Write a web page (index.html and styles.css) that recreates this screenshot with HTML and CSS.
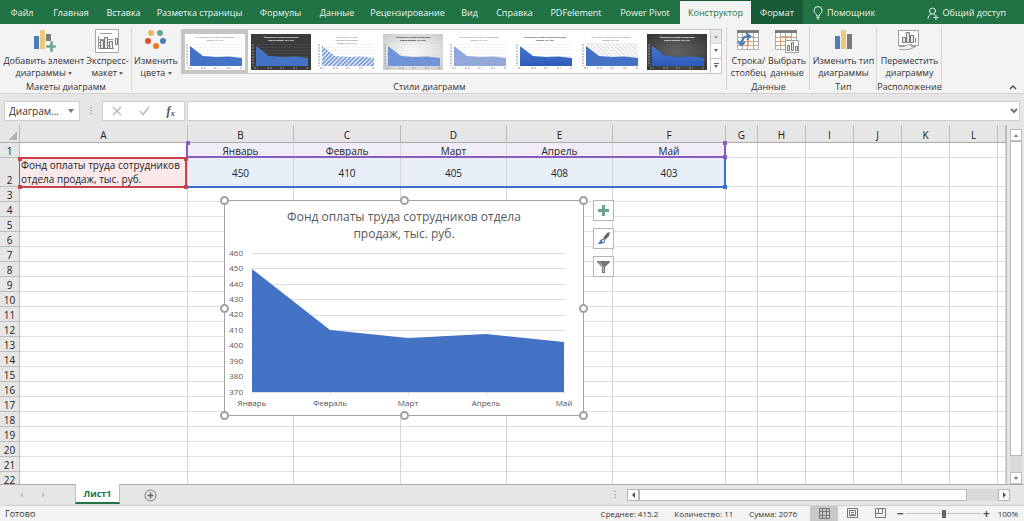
FILE: index.html
```html
<!DOCTYPE html>
<html lang="ru">
<head>
<meta charset="utf-8">
<title>Лист1</title>
<link rel="stylesheet" href="styles.css">
</head>
<body>
<svg class="defs" width="0" height="0" aria-hidden="true">
  <defs>
    <symbol id="thumb" viewBox="0 0 60 36">
      <path class="t-grid" d="M5 10.5H57M5 13.5H57M5 16.5H57M5 19.5H57M5 22.5H57M5 25.5H57"/>
      <path class="t-hatch" d="M5 9H57V24L44 22.500 31 23 18 22 5 12Z"/>
      <path class="t-area" d="M5 12L18 22 31 23 44 22.500 57 24V32H5Z"/>
      <path class="t-axis" d="M2 10V32M3 34H7M16 34H22M29 34H33M42 34H46M55 34H58"/>
    </symbol>
    <linearGradient id="deep" x1="0" y1="0" x2="0" y2="1"><stop offset="0" stop-color="#4577d0"/><stop offset="1" stop-color="#2c5cb8"/></linearGradient>
    <linearGradient id="pale" x1="0" y1="0" x2="0" y2="1"><stop offset="0" stop-color="#8da6de"/><stop offset="1" stop-color="#95a8da"/></linearGradient>
    <pattern id="stripes" width="3" height="3" patternUnits="userSpaceOnUse" patternTransform="rotate(45)"><rect width="3" height="3" fill="#fff"/><rect width="2" height="3" fill="#7f9fd9"/></pattern>
    <pattern id="thin" width="3" height="3" patternUnits="userSpaceOnUse" patternTransform="rotate(-45)"><rect width="1" height="3" fill="#dcdcdc"/></pattern>
  </defs>
</svg>

<nav class="tabs" aria-label="Лента">
  <button>Файл</button><button>Главная</button><button>Вставка</button><button>Разметка страницы</button><button>Формулы</button><button>Данные</button><button>Рецензирование</button><button>Вид</button><button>Справка</button><button>PDFelement</button><button>Power Pivot</button><button class="active">Конструктор</button><button class="context">Формат</button>
  <button class="with-icon"><svg width="10" height="14" viewBox="0 0 10 14"><path d="M3.500 10V8.500C1.500 7 1 6 1 4.500a4 4 0 0 1 8 0C9 6 8.500 7 6.500 8.500V10ZM3.500 11.500H6.500M4 13H6" fill="none" stroke="#e5f0ea"/></svg>Помощник</button>
  <button class="with-icon share"><svg width="12" height="13" viewBox="0 0 12 13"><circle cx="5.500" cy="4" r="3" fill="none" stroke="#e5f0ea"/><path d="M1 12C1 9 3 7.500 4.500 7M6.500 7L8 8.500M9 8V13M6.500 10.500H11.500" fill="none" stroke="#e5f0ea"/></svg>Общий доступ</button>
</nav>

<section class="ribbon">
  <div class="group g-layouts">
    <div class="tools">
      <button class="tool"><svg width="24" height="24" viewBox="0 0 24 24"><path fill="#4a7ebb" d="M2 7h5v13H2z"/><path fill="#ecc87b" d="M8 1h5v19H8z"/><path fill="#7b7b7b" d="M14 5h5v7h-5z"/><path fill="#69a590" stroke="#f3f3f3" stroke-width=".5" d="M18 12h3v4h3v3h-3v4h-3v-4h-4v-3h4z"/></svg><span>Добавить элемент<br>диаграммы <i class="caret"></i></span></button>
      <button class="tool"><svg width="24" height="24" viewBox="0 0 24 24"><path fill="#fff" stroke="#a9a9a9" d="M.5.500h23v23H.5z"/><path fill="none" stroke="#999" d="M5 4.500h12M3.500 7V19.500H19M3 10.500H18M3 13.500H18M3 16.500H18"/><path fill="#e9e9e9" stroke="#777" d="M5.500 11.500h3v8h-3zM9.500 8.500h3v11h-3zM14.500 12.500h3v7h-3zM20.500 9.500h2v6h-2z"/></svg><span>Экспресс-<br>макет <i class="caret"></i></span></button>
    </div>
    <h2>Макеты диаграмм</h2>
  </div>
  <div class="group g-styles">
    <div class="tools">
      <button class="tool"><svg width="24" height="24" viewBox="0 0 24 24"><circle cx="7" cy="4" r="3" fill="#eab765"/><circle cx="16" cy="4" r="3" fill="#6aa78f"/><circle cx="4" cy="12" r="3" fill="#d8532f"/><circle cx="19" cy="12" r="3" fill="#4a7ebb"/><circle cx="12" cy="17" r="3" fill="#e8791e"/></svg><span>Изменить<br>цвета <i class="caret"></i></span></button>
      <div class="gallery">
        <button class="thumb selected" aria-label="Стиль 1"><svg viewBox="0 0 60 36"><use href="#thumb"/><text x="30" y="4">Фонд оплаты труда сотрудников отдела</text><text x="30" y="7">продаж, тыс. руб.</text></svg></button>
        <button class="thumb dark" aria-label="Стиль 2"><svg viewBox="0 0 60 36"><use href="#thumb"/><text x="30" y="4">Фонд оплаты труда сотрудников</text><text x="30" y="7">отдела продаж, тыс. руб.</text></svg></button>
        <button class="thumb striped" aria-label="Стиль 3"><svg viewBox="0 0 60 36"><use href="#thumb"/><text x="30" y="4">ФОНД ОПЛАТЫ ТРУДА</text><text x="30" y="7">СОТРУДНИКОВ ОТДЕЛА</text><text x="30" y="10">ПРОДАЖ, ТЫС. РУБ.</text></svg></button>
        <button class="thumb silver" aria-label="Стиль 4"><svg viewBox="0 0 60 36"><use href="#thumb"/><text x="30" y="4">Фонд оплаты труда сотрудников</text><text x="30" y="7">отдела продаж, тыс. руб.</text></svg></button>
        <button class="thumb pale" aria-label="Стиль 5"><svg viewBox="0 0 60 36"><use href="#thumb"/><text x="30" y="4">Фонд оплаты труда сотрудников отдела</text><text x="30" y="7">продаж, тыс. руб.</text></svg></button>
        <button class="thumb deep" aria-label="Стиль 6"><svg viewBox="0 0 60 36"><use href="#thumb"/><text x="30" y="4">Фонд оплаты труда сотрудников отдела</text><text x="30" y="7">продаж, тыс. руб.</text></svg></button>
        <button class="thumb hatched" aria-label="Стиль 7"><svg viewBox="0 0 60 36"><use href="#thumb"/><text x="30" y="4">Фонд оплаты труда сотрудников отдела</text><text x="30" y="7">продаж, тыс. руб.</text></svg></button>
        <button class="thumb night" aria-label="Стиль 8"><svg viewBox="0 0 60 36"><use href="#thumb"/><text x="30" y="4">Фонд оплаты труда сотрудников</text><text x="30" y="7">отдела продаж, тыс. руб.</text></svg></button>
        <div class="gallery-nav">
          <button disabled aria-label="Вверх"><i class="caret up"></i></button>
          <button aria-label="Вниз"><i class="caret"></i></button>
          <button class="more" aria-label="Ещё"><i class="caret"></i></button>
        </div>
      </div>
    </div>
    <h2>Стили диаграмм</h2>
  </div>
  <div class="group g-data">
    <div class="tools">
      <button class="tool"><svg width="24" height="24" viewBox="0 0 24 24"><path fill="#fff" stroke="#aaa" d="M1.500 1.500h21v19h-21zM1 8.500h22M1 12.500h22M1 16.500h22M6.500 4v16M11.500 4v16M17.500 4v16"/><path fill="#7b7b7b" d="M1 1h22v3H1z"/><path fill="none" stroke="#e9a06d" d="M7.500 7.500h10v9h-10zM12.500 7v9M8 12.500h9"/><path fill="none" stroke="#4a7ebb" stroke-width="2" d="M5 15C6 9 9 7 13 7M10 4l4 3-3 4M2 12l3 4 4-3"/></svg><span>Строка/<br>столбец</span></button>
      <button class="tool"><svg width="24" height="24" viewBox="0 0 24 24"><path fill="#fff" stroke="#aaa" d="M.5 1.500h21v19H.5zM0 8.500h22M0 12.500h22M0 16.500h22M5.500 4v16M10.500 4v16M16.500 4v16"/><path fill="#7b7b7b" d="M0 1h22v3H0z"/><path fill="none" stroke="#e9a06d" d="M5.500 7.500h11v9h-11zM11 7.500v9M6 12.500h10"/><path fill="#fff" stroke="#999" d="M10.500 11.500h13v12h-13z"/><path fill="#e5e5e5" stroke="#777" d="M12.500 16.500h2v5h-2zM16.500 13.500h2v8h-2zM20.500 17.500h2v4h-2z"/></svg><span>Выбрать<br>данные</span></button>
    </div>
    <h2>Данные</h2>
  </div>
  <div class="group g-type">
    <div class="tools">
      <button class="tool"><svg width="24" height="24" viewBox="0 0 24 24"><path fill="#4a7ebb" d="M3 7h5v13H3z"/><path fill="#ecc87b" d="M9 1h5v19H9z"/><path fill="#7b7b7b" d="M15 5h5v15h-5z"/></svg><span>Изменить тип<br>диаграммы</span></button>
    </div>
    <h2>Тип</h2>
  </div>
  <div class="group g-place">
    <div class="tools">
      <button class="tool"><svg width="24" height="24" viewBox="0 0 24 24"><path fill="#fff" stroke="#a0a0a0" d="M1.500 1.500h20v15h-20z"/><path fill="#e5e5e5" stroke="#777" d="M5.500 8.500h3v5h-3zM9.500 3.500h3v10h-3zM13.500 6.500h3v7h-3z"/><path d="M18.500 9v4.500" stroke="#777"/><path fill="#f3f3f3" stroke="#a0a0a0" d="M2 17.500h5l5-2h3l-1 2h5l-7 3H8H2"/></svg><span>Переместить<br>диаграмму</span></button>
    </div>
    <h2>Расположение</h2>
  </div>
  <button class="collapse" aria-label="Свернуть ленту"><svg width="8" height="6" viewBox="0 0 8 6"><path d="M1 5L4 2 7 5" fill="none" stroke="#555" stroke-width="1.500"/></svg></button>
</section>

<section class="formula-bar">
  <div class="namebox"><input aria-label="Имя" value="Диаграм..."><button aria-label="Список имён"><i class="caret"></i></button></div>
  <span class="dots"></span>
  <div class="fx">
    <button aria-label="Отмена"><svg width="10" height="10" viewBox="0 0 10 10"><path d="M1 1L9 9M9 1L1 9" stroke="#bbb" stroke-width="1.500"/></svg></button>
    <button aria-label="Ввод"><svg width="11" height="10" viewBox="0 0 11 10"><path d="M1 5L4 8.500 10 1" fill="none" stroke="#bbb" stroke-width="1.500"/></svg></button>
    <button aria-label="Вставить функцию" class="fx-btn">f<sub>x</sub></button>
  </div>
  <div class="formula"><input aria-label="Строка формул"><svg width="8" height="6" viewBox="0 0 8 6"><path d="M1 1L4 4 7 1" fill="none" stroke="#777" stroke-width="2"/></svg></div>
</section>

<main class="workspace">
  <div class="sheet">
    <table class="grid">
      <colgroup><col class="c-num"><col class="c-a"><col class="c-m"><col class="c-m2"><col class="c-m"><col class="c-m"><col class="c-f"><col class="c-g"><col class="c-s"><col class="c-s"><col class="c-s"><col class="c-s"><col class="c-s"><col></colgroup>
      <thead><tr><th class="corner"></th><th>A</th><th>B</th><th>C</th><th>D</th><th>E</th><th>F</th><th>G</th><th>H</th><th>I</th><th>J</th><th>K</th><th>L</th><th></th></tr></thead>
      <tbody id="rows">
        <tr><th>1</th><td></td><td class="cat">Январь</td><td class="cat">Февраль</td><td class="cat">Март</td><td class="cat">Апрель</td><td class="cat">Май</td><td></td><td></td><td></td><td></td><td></td><td></td><td></td></tr>
        <tr class="tall"><th>2</th><td class="series">Фонд оплаты труда сотрудников<br>отдела продаж, тыс. руб.</td><td class="val">450</td><td class="val">410</td><td class="val">405</td><td class="val">408</td><td class="val">403</td><td></td><td></td><td></td><td></td><td></td><td></td><td></td></tr>
      </tbody>
    </table>
    <div class="range purple"><i class="se"></i><i class="ne"></i><i class="nw"></i></div>
    <div class="range blue"><i class="se"></i></div>
    <div class="range red"><i class="nw"></i><i class="ne"></i><i class="sw"></i><i class="se"></i></div>

    <figure class="chart">
      <figcaption>Фонд оплаты труда сотрудников отдела<br>продаж, тыс. руб.</figcaption>
      <svg class="plot" viewBox="0 0 358 167" role="img" aria-label="Диаграмма с областями">
        <path class="lines" d="M27 5.500H340M27 20.500H340M27 36.500H340M27 51.500H340M27 67.500H340M27 82.500H340M27 98.500H340M27 113.500H340M27 129.500H340"/>
        <path fill="#4472c4" d="M27 21L105 82 183 90 261 86 339 94V144H27Z"/>
        <path class="lines" d="M27 144.500H340M27.500 144V147M105.500 144V147M183.500 144V147M261.500 144V147M339.500 144V147"/>
        <g text-anchor="end"><text x="18" y="8">460</text><text x="18" y="23">450</text><text x="18" y="39">440</text><text x="18" y="54">430</text><text x="18" y="69">420</text><text x="18" y="85">410</text><text x="18" y="100">400</text><text x="18" y="116">390</text><text x="18" y="131">380</text><text x="18" y="147">370</text></g>
        <g text-anchor="middle"><text x="27" y="158">Январь</text><text x="105" y="158">Февраль</text><text x="183" y="158">Март</text><text x="261" y="158">Апрель</text><text x="339" y="158">Май</text></g>
      </svg>
      <i class="knob nw"></i><i class="knob n"></i><i class="knob ne"></i><i class="knob w"></i><i class="knob e"></i><i class="knob sw"></i><i class="knob s"></i><i class="knob se"></i>
    </figure>
    <div class="chart-tools">
      <button aria-label="Элементы диаграммы"><svg width="19" height="19" viewBox="0 0 19 19"><path fill="#69a590" d="M8 4h3v4h4v3h-4v4H8v-4H4V8h4z"/></svg></button>
      <button aria-label="Стили диаграммы"><svg width="19" height="19" viewBox="0 0 19 19"><path fill="#666" d="M16 3l-1 4-4 4-2-2 4-5z"/><path fill="#4a7ebb" d="M8 10c3 0 4 2 2 4-2 1-5 1-7 1 3-1 2-4 5-5z"/><circle cx="9" cy="12" r="1" fill="#fff"/></svg></button>
      <button aria-label="Фильтры диаграммы"><svg width="19" height="19" viewBox="0 0 19 19"><path fill="#777" d="M3 4h13v1l-5 5v6H8v-6L3 5z"/><path d="M5 5l4.500 5v5" fill="none" stroke="#ddd" stroke-width=".7"/></svg></button>
    </div>
  </div>
  <div class="vscroll"><button aria-label="Прокрутить вверх"><i class="caret up"></i></button><span class="bar"></span><span class="rest"></span><button aria-label="Прокрутить вниз"><i class="caret"></i></button></div>
</main>

<section class="sheet-tabs">
  <i class="nav left"></i><i class="nav right"></i>
  <button class="sheet-tab">Лист1</button>
  <button class="add" aria-label="Новый лист"><svg width="13" height="13" viewBox="0 0 13 13"><circle cx="6.500" cy="6.500" r="5.500" fill="none" stroke="#777"/><path d="M6.500 3.500V9.500M3.500 6.500H9.500" stroke="#666" stroke-width="1.500"/></svg></button>
  <span class="dots"></span>
  <div class="hscroll"><button aria-label="Влево"><i class="side left"></i></button><span class="bar"></span><span class="rest"></span><button aria-label="Вправо"><i class="side right"></i></button></div>
</section>

<footer class="status">
  <span class="ready">Готово</span>
  <span>Среднее: 415.2</span><span>Количество: 11</span><span>Сумма: 2076</span>
  <div class="views">
    <button class="on" aria-label="Обычный"><svg width="11" height="11" viewBox="0 0 11 11"><path d="M.5.500h10v10H.5zM.5 3.500h10M.5 7.500h10M3.500 0v11M7.500 0v11" fill="none" stroke="#777"/></svg></button>
    <button aria-label="Разметка страницы"><svg width="11" height="11" viewBox="0 0 11 11"><path d="M.5.500h10v9H.5zM2.500 2.500h6v5h-6zM4 4.500h3M4 6.500h3" fill="none" stroke="#777"/></svg></button>
    <button aria-label="Страничный"><svg width="11" height="11" viewBox="0 0 11 11"><path d="M.5.500h10v9H.5zM3.500 0v5.500h4V0M0 5.500h3" fill="none" stroke="#777"/></svg></button>
  </div>
  <div class="zoom"><button aria-label="Мельче">−</button><input type="range" min="0" max="100" value="50" aria-label="Масштаб"><button aria-label="Крупнее">+</button><span>100%</span></div>
</footer>
<script src="script.js"></script>
</body>
</html>
```
FILE: styles.css
```css
* { box-sizing: border-box; }
html, body { height: 100%; }
body { margin: 0; display: flex; flex-direction: column; overflow: hidden; background: #e6e6e6; color: #333; font: 10px/12px "Open Sans", "Noto Sans", sans-serif; }
button, input { margin: 0; padding: 0; border: 0; background: none; color: inherit; font: inherit; border-radius: 0; outline: 0; }
svg { display: block; flex: none; }
.defs { position: absolute; }
.caret { display: inline-block; border: 2px solid transparent; border-top: 3px solid #666; border-bottom: 0; vertical-align: middle; }
.caret.up { border-top: 0; border-bottom: 3px solid #777; }

.tabs { display: grid; grid-template-columns: 44px 54px 51px 101px 61px 52px 89px 35px 55px 68px 70px 71px 52px 84px 1fr; height: 24px; flex: none; background: #217346; color: #eaf3ee; }
.tabs button { white-space: nowrap; padding-top: 2px; font-size: 9px; }
.tabs .active { background: #f3f3f3; color: #217346; border-top: 1px solid #185a34; padding-top: 1px; }
.tabs .context { background: #185c37; }
.tabs .with-icon { display: flex; align-items: center; gap: 4px; padding-left: 10px; }
.tabs .share { justify-content: flex-end; padding-right: 18px; }

.ribbon { display: flex; height: 70px; flex: none; background: #f3f3f3; border-bottom: 1px solid #d2d2d2; padding-top: 3px; }
.group { display: flex; flex-direction: column; justify-content: space-between; height: 66px; background: linear-gradient(#d5d5d5, #d5d5d5) right top / 1px 63px no-repeat; }
.g-layouts { width: 132px; }
.g-styles { width: 595px; }
.g-data { width: 83px; }
.g-type { width: 67px; }
.g-place { width: 65px; }
.group h2 { margin: 0; font: 9px/12px "Open Sans", sans-serif; text-align: center; white-space: nowrap; }
.tools { display: flex; justify-content: center; }
.tool { display: flex; flex-direction: column; align-items: center; gap: 2px; padding: 2px 1px 0; white-space: nowrap; font-size: 9px; }
.g-styles .tools { justify-content: flex-start; gap: 1px; }
.g-styles .tool { width: 48px; }
.gallery { display: flex; align-items: flex-start; height: 45px; margin-top: 2px; border: 1px solid #c6c6c6; background: #fff; }
.thumb { width: 66px; height: 43px; padding: 3px; }
.thumb svg { width: 60px; height: 36px; background: #fff; }
.thumb.selected { background: #c6c6c6; }
.thumb text { font: 2px "Open Sans", sans-serif; text-anchor: middle; fill: #555; }
.t-area { fill: var(--area, #4472c4); }
.t-hatch { fill: var(--hatch, none); }
.t-grid { stroke: var(--grid, #e8e8e8); stroke-width: .5; }
.t-axis { stroke: #999; stroke-dasharray: 2 1; fill: none; }
.thumb.dark svg { background: #3b3b3b; }
.thumb.dark text, .thumb.night text { fill: #fff; font-weight: 700; }
.thumb.silver svg { background: radial-gradient(#fff, #c9c9c9); }
.thumb.silver text { fill: #222; font-weight: 700; }
.thumb.deep text { fill: #444; font-weight: 700; }
.thumb.night svg { background: radial-gradient(#666, #333); }
.thumb.dark use { --grid: #555; }
.thumb.striped use { --area: url(#stripes); }
.thumb.silver use { --area: #6f94d8; }
.thumb.pale use { --area: url(#pale); }
.thumb.deep use { --area: url(#deep); }
.thumb.night use { --area: url(#deep); --grid: #555; }
.thumb.hatched use { --hatch: url(#thin); }
.gallery-nav { width: 11px; align-self: stretch; display: grid; grid-template-rows: 1fr 1fr 1fr; border-left: 1px solid #c6c6c6; }
.gallery-nav button { display: flex; flex-direction: column; gap: 1px; align-items: center; justify-content: center; border-bottom: 1px solid #c6c6c6; }
.gallery-nav button:disabled { background: #e1e1e1; opacity: .7; }
.gallery-nav .more { border-bottom: 0; }
.more::before { content: ""; width: 5px; height: 1px; background: #666; }
.collapse { margin-left: auto; align-self: flex-end; padding: 0 7px 3px; }

.formula-bar { display: flex; align-items: stretch; height: 31px; flex: none; padding: 7px 4px 4px; }
.namebox, .fx, .formula { display: flex; align-items: center; background: #fff; border: 1px solid #cfcfcf; }
.namebox { width: 76px; padding: 0 5px 0 4px; justify-content: space-between; }
.namebox input { width: 56px; }
.namebox button { display: flex; }
.namebox .caret { border-width: 4px 3px 0; border-top-color: #777; }
.dots { width: 2px; height: 9px; align-self: center; background: repeating-linear-gradient(#aaa 0 1px, transparent 1px 3px); }
.formula-bar .dots { margin: 0 10px; }
.fx { width: 83px; justify-content: space-between; padding: 0 9px; }
.fx-btn { font: italic bold 12px/14px "Liberation Serif", serif; color: #555; }
.fx-btn sub { font-size: 9px; line-height: 1px; vertical-align: -1px; }
.formula { flex: 1; margin-left: 2px; padding-right: 1px; }
.formula input { flex: 1; }

.workspace { flex: 1; min-height: 0; display: grid; grid-template-columns: 1fr 17px; }
.sheet { position: relative; overflow: hidden; border-right: 1px solid #bbb; }
.grid { width: 100%; table-layout: fixed; border-collapse: separate; border-spacing: 0; background: #fff; color: #222; }
.c-num { width: 20px; }
.c-a { width: 168px; }
.c-m { width: 106px; }
.c-m2 { width: 107px; }
.c-f { width: 113px; }
.c-g { width: 32px; }
.c-s { width: 48px; }
.grid th, .grid td { padding: 2px 0 0; height: 15px; line-height: 12px; border-right: 1px solid #d6d6d6; border-bottom: 1px solid #dfdfdf; text-align: center; white-space: nowrap; overflow: hidden; }
.grid th { background: #e6e6e6; border-color: #bcbcbc; font-weight: 400; vertical-align: bottom; }
.grid thead th { height: 18px; line-height: 14px; border-bottom-color: #ababab; }
.grid .corner { background: linear-gradient(135deg, #e6e6e6 50%, #b3b3b3 50%) 8px 6px / 9px 9px no-repeat #e6e6e6; }
.grid .tall th, .grid .tall td { height: 29px; }
.grid td.cat { background: #f1edf8; }
.grid td.val { background: #e9eff9; font-weight: 500; }
.grid td.series { background: #fbe9ea; text-align: left; padding: 0 0 0 1px; line-height: 14px; }
.range { position: absolute; border: 0 solid; pointer-events: none; }
.purple { left: 186px; top: 18px; width: 540px; height: 15px; color: #8a5cc0; border-width: 0 2px 2px; }
.blue { left: 186px; top: 33px; width: 540px; height: 30px; color: #3b6fd0; border-width: 0 2px 2px 0; }
.red { left: 19px; top: 32px; width: 168px; height: 31px; color: #c8414b; border-width: 2px 2px 2px 1px; }
.range i { position: absolute; width: 4px; height: 4px; background: currentColor; }
.range .nw, .range .ne { top: -2px; }
.range .sw, .range .se { bottom: -3px; }
.range .nw, .range .sw { left: -2px; }
.range .ne, .range .se { right: -3px; }

.chart { position: absolute; left: 224px; top: 75px; width: 360px; margin: 0; padding-top: 7px; border: 1px solid #a2a2a2; background: #fff; color: #595959; }
.chart figcaption { font: 12px/17px "Open Sans", sans-serif; text-align: center; white-space: nowrap; }
.plot { width: 100%; margin-top: 6px; overflow: visible; }
.plot text { font: 8px "Open Sans", sans-serif; fill: #555; }
.plot .lines { stroke: #dedede; fill: none; }
.knob { position: absolute; width: 9px; height: 9px; border: 2px solid #a0a0a0; border-radius: 50%; background: #fff; }
.knob.nw, .knob.n, .knob.ne { top: -5px; }
.knob.sw, .knob.s, .knob.se { bottom: -5px; }
.knob.nw, .knob.w, .knob.sw { left: -5px; }
.knob.ne, .knob.e, .knob.se { right: -5px; }
.knob.w, .knob.e { top: calc(50% - 4px); }
.knob.n, .knob.s { left: calc(50% - 4px); }
.chart-tools { position: absolute; left: 593px; top: 75px; display: grid; gap: 7px; }
.chart-tools button { border: 1px solid #b5b5b5; background: #fff; }

.vscroll { display: flex; flex-direction: column; padding: 4px 2px 0 3px; }
.vscroll button { height: 12px; display: flex; align-items: center; justify-content: center; background: #fff; border: 1px solid #bbb; flex: none; }
.vscroll .bar { flex: 1; background: #fff; border: 1px solid #b5b5b5; }
.vscroll .rest { height: 16px; background: #dadada; }

.sheet-tabs { display: flex; align-items: stretch; height: 21px; flex: none; border-top: 1px solid #ababab; padding-right: 14px; }
.nav { align-self: center; border: 3px solid transparent; }
.nav.left { border-right-color: #c0c0c0; margin-left: 20px; border-left: 0; }
.nav.right { border-left-color: #c0c0c0; margin-left: 19px; border-right: 0; }
.sheet-tab { width: 45px; height: 20px; margin: -1px 0 0 30px; padding-top: 2px; background: #fff; border: 1px solid #bbb; border-top: 0; border-bottom: 2px solid #217346; color: #217346; font-weight: 700; font-size: 9px; }
.add { margin-left: 24px; }
.sheet-tabs .dots { margin-left: auto; margin-right: 11px; }
.hscroll { display: flex; width: 383px; height: 12px; align-self: center; }
.hscroll button { width: 12px; display: flex; align-items: center; justify-content: center; background: #fff; border: 1px solid #b5b5b5; }
.hscroll .bar { flex: 1; background: #fff; border: 1px solid #b5b5b5; }
.hscroll .rest { width: 31px; background: #dadada; }
.side { border: 3px solid transparent; }
.side.left { border-left: 0; border-right-color: #555; }
.side.right { border-right: 0; border-left-color: #555; }

.status { display: flex; align-items: center; gap: 16px; height: 16px; flex: none; background: #f3f3f3; border-top: 1px solid #cfcfcf; padding-left: 5px; font-size: 8px; white-space: nowrap; }
.ready { margin-right: auto; font-size: 9px; }
.views { display: flex; align-self: stretch; margin-left: -3px; }
.views button { width: 28px; display: flex; align-items: center; justify-content: center; }
.views .on { background: #c8c8c8; }
.zoom { display: flex; align-items: center; width: 128px; margin-left: -14px; gap: 1px; padding-right: 6px; }
.zoom button { font-size: 12px; font-weight: 700; color: #555; width: 9px; }
.zoom span { margin-left: auto; }
.zoom input { appearance: none; width: 75px; height: 12px; background: linear-gradient(#c4c4c4, #c4c4c4) center / 100% 1px no-repeat; }
.zoom input::-webkit-slider-thumb { appearance: none; width: 4px; height: 8px; background: #666; }
```
FILE: script.js
```js
const body = document.getElementById('rows');
for (let n = 3; n <= 22; n++) {
  const row = body.insertRow();
  const head = document.createElement('th');
  head.textContent = n;
  row.append(head);
  for (let c = 0; c < 13; c++) row.insertCell();
}
```
